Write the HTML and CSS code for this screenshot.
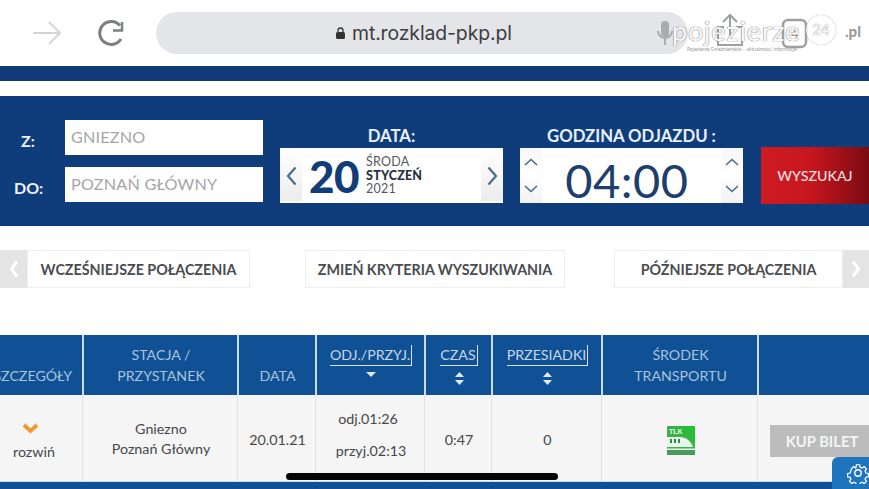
FILE: index.html
```html
<!DOCTYPE html>
<html lang="pl">
<head>
<meta charset="utf-8">
<title>Rozkład PKP</title>
<link rel="stylesheet" href="styles.css">
</head>
<body>
<div class="page">
  <header class="browser">
    <svg class="b-arrow" width="30" height="26" viewBox="0 0 30 26"><path d="M1 13H28M17 2L28 13L17 24" fill="none" stroke="#d3d5d8" stroke-width="2"/></svg>
    <svg class="b-reload" width="28" height="28" viewBox="0 0 28 28"><path d="M23 20A11.5 11.5 0 1 1 22 6.500" fill="none" stroke="#7d7f82" stroke-width="3"/><path d="M24 3V11.500H15" fill="none" stroke="#7d7f82" stroke-width="2.500"/></svg>
    <div class="url">
      <svg class="lock" width="9" height="12" viewBox="0 0 9 12"><rect x="0" y="5" width="9" height="7" rx="1.500" fill="#333"/><path d="M2 5V3.500a2.500 2.500 0 0 1 5 0V5" fill="none" stroke="#333" stroke-width="1.300"/></svg>
      <span class="url-text">mt.rozklad-pkp.pl</span>
      <svg class="mic" width="16" height="26" viewBox="0 0 16 26"><rect x="4" y="1" width="8" height="16" rx="4" fill="#a9abaf"/><path d="M1 11a7 7 0 0 0 14 0M8 18V25" fill="none" stroke="#a9abaf" stroke-width="2"/></svg>
    </div>
  </header>
  <div class="stripe"></div>

  <section class="panel">
    <div class="places">
      <div class="place"><span class="place-label">Z:</span><div class="field">GNIEZNO</div></div>
      <div class="place"><span class="place-label">DO:</span><div class="field">POZNAŃ GŁÓWNY</div></div>
    </div>
    <div class="picker">
      <div class="picker-title">DATA:</div>
      <div class="picker-box">
        <div class="side"><svg width="11" height="20" viewBox="0 0 11 20"><path d="M9.500 1.500L2 10L9.500 18.500" fill="none" stroke="#4b6a90" stroke-width="2.200"/></svg></div>
        <div class="date">
          <span class="day">20</span>
          <span class="date-text"><span>ŚRODA</span><b>STYCZEŃ</b><span>2021</span></span>
        </div>
        <div class="side"><svg width="11" height="20" viewBox="0 0 11 20"><path d="M1.500 1.500L9 10L1.500 18.500" fill="none" stroke="#4b6a90" stroke-width="2.200"/></svg></div>
      </div>
    </div>
    <div class="picker">
      <div class="picker-title">GODZINA ODJAZDU :</div>
      <div class="picker-box">
        <div class="side spin">
          <svg width="14" height="8" viewBox="0 0 14 8"><path d="M1 7L7 1.500L13 7" fill="none" stroke="#4b6a90" stroke-width="1.600"/></svg>
          <svg width="14" height="8" viewBox="0 0 14 8"><path d="M1 1L7 6.500L13 1" fill="none" stroke="#4b6a90" stroke-width="1.600"/></svg>
        </div>
        <div class="time">04:00</div>
        <div class="side spin">
          <svg width="14" height="8" viewBox="0 0 14 8"><path d="M1 7L7 1.500L13 7" fill="none" stroke="#4b6a90" stroke-width="1.600"/></svg>
          <svg width="14" height="8" viewBox="0 0 14 8"><path d="M1 1L7 6.500L13 1" fill="none" stroke="#4b6a90" stroke-width="1.600"/></svg>
        </div>
      </div>
    </div>
    <div class="search">WYSZUKAJ</div>
  </section>

  <nav class="nav">
    <div class="nav-group">
      <div class="nav-chev"><svg width="10" height="18" viewBox="0 0 10 18"><path d="M8 1.500L2.500 9L8 16.500" fill="none" stroke="#fff" stroke-width="3"/></svg></div>
      <div class="nav-btn early">WCZEŚNIEJSZE POŁĄCZENIA</div>
    </div>
    <div class="nav-btn change">ZMIEŃ KRYTERIA WYSZUKIWANIA</div>
    <div class="nav-group">
      <div class="nav-btn late">PÓŹNIEJSZE POŁĄCZENIA</div>
      <div class="nav-chev nav-chev-right"><svg width="10" height="18" viewBox="0 0 10 18"><path d="M2 1.500L7.500 9L2 16.500" fill="none" stroke="#fff" stroke-width="3"/></svg></div>
    </div>
  </nav>

  <section class="table">
    <div class="th th-clip"><span>SZCZEGÓŁY</span></div>
    <div class="th"><span>STACJA /<br>PRZYSTANEK</span></div>
    <div class="th"><span>DATA</span></div>
    <div class="th th-sort"><span class="sort">ODJ./PRZYJ.</span><svg width="10" height="6" viewBox="0 0 10 6"><path d="M0 0H10L5 5Z" fill="#dfe8f2"/></svg></div>
    <div class="th th-sort"><span class="sort">CZAS</span><svg width="9" height="13" viewBox="0 0 9 13"><path d="M0 5L4.500 0L9 5ZM0 8H9L4.500 13Z" fill="#dfe8f2"/></svg></div>
    <div class="th th-sort"><span class="sort">PRZESIADKI</span><svg width="9" height="13" viewBox="0 0 9 13"><path d="M0 5L4.500 0L9 5ZM0 8H9L4.500 13Z" fill="#dfe8f2"/></svg></div>
    <div class="th"><span>ŚRODEK<br>TRANSPORTU</span></div>
    <div class="th th-last"></div>

    <div class="td td-more">
      <svg class="more-icon" width="17" height="11" viewBox="0 0 17 11"><path d="M2 2L8.500 8L15 2" fill="none" stroke="#ef9a30" stroke-width="3.800"/></svg>
      <span class="more-text">rozwiń</span>
    </div>
    <div class="td td-station">Gniezno<br>Poznań Główny</div>
    <div class="td">20.01.21</div>
    <div class="td td-times"><span class="time-dep">odj.01:26</span><span>przyj.02:13</span></div>
    <div class="td">0:47</div>
    <div class="td">0</div>
    <div class="td">
      <svg class="tlk" width="28" height="29" viewBox="0 0 28 29">
        <defs><linearGradient id="tlkbg" x1="0" y1="1" x2="1" y2="0"><stop offset="0" stop-color="#4aa85e"/><stop offset="1" stop-color="#22c02f"/></linearGradient></defs>
        <rect width="28" height="29" rx="1" fill="url(#tlkbg)"/>
        <rect y="24" width="28" height="5" fill="#4a9a5c"/>
        <text x="2" y="8" class="tlk-text">TLK</text>
        <path d="M0 11H13C19 11 24 15 26 21H0Z" fill="#e9f5ea"/>
        <path d="M3 13h2v4H3zM7 13h2v4H7zM11 13h2v4h-2z" fill="#2f8a45"/>
        <rect y="22.500" width="28" height="1.500" fill="#e9f5ea"/>
      </svg>
    </div>
    <div class="td td-buy"><div class="buy">KUP BILET</div></div>
  </section>
  <div class="footer"></div>

  <div class="gear">
    <svg width="22" height="22" viewBox="0 0 24 24"><path d="M10 2h4l.6 3 2.300 1 2.600-1.700 2.800 2.800-1.700 2.600 1 2.300 3 .6v4l-3 .6-1 2.300 1.700 2.600-2.800 2.800-2.600-1.700-2.300 1-.6 3h-4l-.6-3-2.300-1-2.600 1.700-2.800-2.800 1.700-2.600-1-2.300-3-.6v-4l3-.6 1-2.300L3.800 7.100l2.800-2.800 2.600 1.700 0 0 .2-.1Z" fill="none" stroke="#fff" stroke-width="1.500" transform="translate(1.200 1.200) scale(.9)"/><circle cx="12" cy="12" r="3.500" fill="none" stroke="#fff" stroke-width="1.500"/></svg>
  </div>
  <div class="home-bar"></div>
  <svg class="share-icons" width="104" height="42" viewBox="0 0 104 42">
    <path d="M16 15H10V33H34V15H28M22 27V3M15 10L22 3L29 10" fill="none" stroke="#7d7f82" stroke-width="2"/>
    <rect x="75" y="8" width="23" height="27" rx="5" fill="none" stroke="#7d7f82" stroke-width="2.500"/>
    <text x="83" y="26" class="tab-count">4</text>
  </svg>
  <div class="watermark">
    <span class="wm-name">pojezierze</span>
    <span class="wm-badge">24</span>
    <span class="wm-pl">.pl</span>
    <span class="wm-sub">Pojezierze Gnieźnieńskie – aktualności, informacje</span>
  </div>
</div>
</body>
</html>
```
FILE: styles.css
```css
* { box-sizing: border-box; }
html, body { margin: 0; padding: 0; background: #fff; }
body { font-family: "Lato", "Liberation Sans", sans-serif; overflow: hidden; }
.page { position: relative; width: 869px; height: 489px; overflow: hidden; background: #fff; }

.browser { height: 66px; display: flex; align-items: center; padding: 0 0 0 32px; }
.b-reload { margin-left: 36px; }
.url { margin-left: 30px; width: 532px; height: 42px; border-radius: 21px; background: #e4e5e9; display: flex; align-items: center; padding-left: 180px; }
.lock { margin-right: 7px; }
.url-text { font-family: "Inter", "Open Sans", sans-serif; font-size: 19.400px; color: #3c3d40; letter-spacing: -.1px; }
.mic { margin-left: 145px; flex: none; }

.stripe { height: 15px; background: #113b78; margin-bottom: 15px; }

.panel { height: 130px; background: #0f3d7c; display: flex; align-items: flex-start; padding: 24px 0 0 14px; color: #fff; }
.places { display: flex; flex-direction: column; gap: 12px; width: 249px; }
.place { display: flex; align-items: center; height: 35px; }
.place-label { width: 51px; font-weight: 700; font-size: 16px; color: #eef2f7; text-align: left; padding-top: 5px; }
.place:first-child .place-label { padding-left: 7px; }
.field { width: 198px; height: 35px; background: #fff; color: #a4a6a9; font-size: 16.200px; line-height: 33px; padding-left: 6px; letter-spacing: .2px; }
.picker { margin-left: 17px; width: 223px; display: flex; flex-direction: column; }
.picker-title { height: 28px; line-height: 33px; text-align: center; font-size: 16.700px; font-weight: 700; color: #eaf0f7; }
.picker-box { height: 55px; background: #fff; display: flex; justify-content: space-between; align-items: stretch; }
.side { width: 22px; background: linear-gradient(#fff, #ececec); display: flex; align-items: center; justify-content: center; margin: 2px 0; }
.spin { flex-direction: column; justify-content: space-around; background: linear-gradient(#f7f7f7, #fff 50%, #f2f2f2); margin: 0; }
.date { flex: 1; display: flex; align-items: center; padding-left: 7px; color: #123c75; }
.day { font-size: 44px; font-weight: 900; line-height: 1; letter-spacing: -.5px; }
.date-text { display: flex; flex-direction: column; margin-left: 7px; font-size: 12.500px; line-height: 13.500px; color: #54585e; letter-spacing: .2px; }
.date-text b { color: #27303f; font-weight: 900; }
.time { flex: 1; text-align: center; font-size: 47px; line-height: 64px; height: 55px; color: #1e3f6d; letter-spacing: .5px; padding-right: 9px; }
.search { margin: 27px 0 0 18px; width: 108px; height: 57px; background: linear-gradient(90deg, #cf1c23, #c8161e 45%, #7c0b12); color: #efe0e0; font-size: 14.200px; font-weight: 500; display: flex; align-items: center; justify-content: center; }

.nav { margin-top: 24px; height: 38px; display: flex; align-items: stretch; }
.nav-group { display: flex; }
.nav-chev { width: 27px; flex: none; background: #e4e4e4; display: flex; align-items: center; justify-content: center; }
.nav-chev-right { width: 26px; }
.nav-btn { flex: none; border: 1.500px solid #eeeeee; background: #fff; color: #4a4c50; font-weight: 700; font-size: 14.300px; display: flex; align-items: center; justify-content: center; }
.early { width: 223px; }
.change { width: 260px; margin: 0 49px 0 55px; }
.late { width: 229px; }

.table { margin-top: 47px; display: grid; grid-template-columns: 82px 155px 78px 109px 67px 110px 156px 112px; grid-template-rows: 60px 86px; }
.th { background: #0f5194; color: #a9c2dc; font-size: 14.200px; line-height: 20.500px; text-align: center; border-left: 2px solid #c9dcec; display: flex; flex-direction: column; align-items: center; justify-content: flex-end; padding: 0 0 9px 1px; }
.th-clip { border-left: 0; align-items: flex-end; padding-right: 10px; padding-left: 0; }
.th-clip span { white-space: nowrap; margin-left: -20px; }
.th-sort { justify-content: flex-start; padding-top: 10px; padding-bottom: 0; color: #c5d7e8; }
.sort { line-height: 20px; border-bottom: 1px solid #d8e4f0; border-right: 1px solid #d8e4f0; padding-right: 1px; margin-bottom: 6px; }
.td { background: #f5f5f5; border-left: 1px solid #e1e1e1; color: #45474b; font-size: 14.300px; display: flex; align-items: center; justify-content: center; text-align: center; padding: 2px 0 0 2px; }
.td-more { border-left: 0; flex-direction: column; align-items: flex-start; gap: 9px; padding: 6px 0 0 13px; }
.more-icon { margin-left: 9px; }
.td-station { line-height: 20.500px; }
.td-times { flex-direction: column; gap: 14px; line-height: 18px; padding: 0 0 6px 2px; }
.time-dep { margin-right: 6px; }
.td-buy { justify-content: flex-end; padding: 6px 0 0 0; }
.buy { width: 99px; height: 32px; background: #bcbcbc; color: #f4f4f4; font-weight: 700; font-size: 14.800px; line-height: 32px; text-align: center; padding-left: 5px; white-space: nowrap; }
.tlk { margin-top: 2px; }
.tlk-text { font-family: "Liberation Sans", sans-serif; font-size: 7px; font-weight: 700; fill: #e9f5ea; }
.footer { height: 8px; background: #0f5194; border-top: 1px solid #c9dcec; }

.gear { position: absolute; left: 832px; top: 457px; width: 40px; height: 32px; background: #1e74bd; border-radius: 6px 0 0 0; display: flex; align-items: center; padding-left: 15px; }
.home-bar { position: absolute; left: 286px; top: 473px; width: 272px; height: 7px; border-radius: 4px; background: #050505; }

.watermark { position: absolute; left: 672px; top: 8px; width: 197px; height: 50px; color: #fff; }
.wm-name { position: absolute; left: 0; top: 6px; font-size: 27px; letter-spacing: .8px; color: #fafafa; text-shadow: 0 0 1px #777, 0 0 1px #777; }
.wm-badge { position: absolute; left: 134px; top: 7px; width: 30px; height: 30px; border-radius: 50%; border: 1.500px solid #f7f7f7; box-shadow: 0 0 1px #888; font-size: 15px; line-height: 27px; text-align: center; color: #fafafa; text-shadow: 0 0 1px #666; }
.wm-pl { position: absolute; left: 173px; top: 14px; font-size: 15px; font-weight: 900; color: #9a9a9a; }
.wm-sub { position: absolute; left: 15px; top: 38px; font-size: 5px; color: #999; white-space: nowrap; }
.share-icons { position: absolute; left: 708px; top: 12px; opacity: .75; }
.tab-count { font-family: "Liberation Sans", sans-serif; font-size: 14px; fill: #7d7f82; }
```
